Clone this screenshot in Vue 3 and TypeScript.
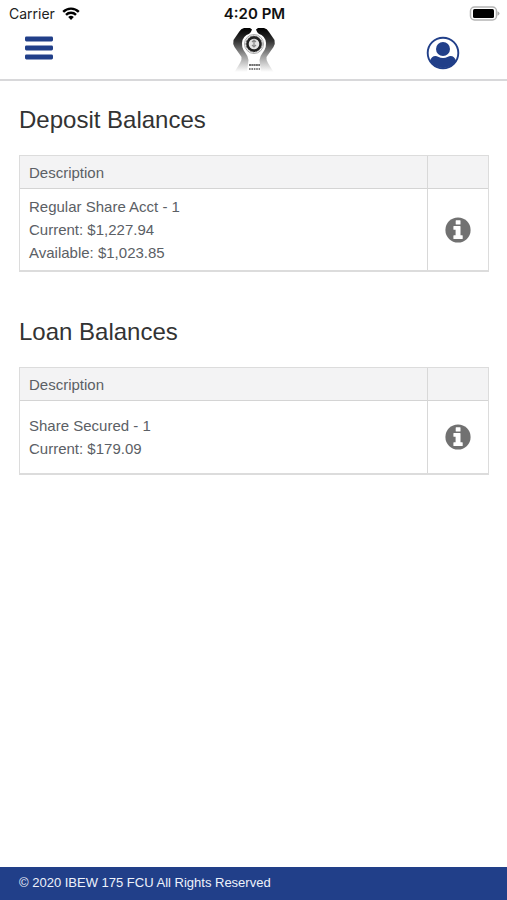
<script setup lang="ts">
interface Account {
  name: string
  lines: string[]
}

interface Section {
  id: string
  title: string
  accounts: Account[]
}

const sections: Section[] = [
  {
    id: 'deposits',
    title: 'Deposit Balances',
    accounts: [
      { name: 'Regular Share Acct - 1', lines: ['Current: $1,227.94', 'Available: $1,023.85'] },
    ],
  },
  {
    id: 'loans',
    title: 'Loan Balances',
    accounts: [{ name: 'Share Secured - 1', lines: ['Current: $179.09'] }],
  },
]
</script>

<template>
  <div class="page">
    <header class="top">
      <div class="status">
        <span class="carrier">
          Carrier
          <svg class="wifi" viewBox="0 0 18 13" aria-hidden="true">
            <path d="M1.2 4.9a11 11 0 0 1 15.6 0" />
            <path d="M4 7.8a7.1 7.1 0 0 1 10 0" />
            <path class="dot" d="M9 13 6.2 10.1a4 4 0 0 1 5.6 0z" />
          </svg>
        </span>
        <span class="time">4:20 PM</span>
        <svg class="battery" viewBox="0 0 31 15" aria-hidden="true">
          <rect x="1.500" y="1" width="26" height="13" rx="4" fill="#fff" stroke="#b4b4b4" stroke-width="1.500" />
          <rect x="4" y="3" width="21" height="9" rx="1.500" fill="#000" />
          <path d="M28.500 5.200q2 .8 2 2.300t-2 2.300z" fill="#aaa" />
        </svg>
      </div>
      <nav class="bar">
        <button class="icon-button menu-button" type="button" aria-label="Menu">
          <svg class="menu" viewBox="0 0 28 24" aria-hidden="true">
            <rect y="0.500" width="28" height="5" rx="1.400" />
            <rect y="9.500" width="28" height="5" rx="1.400" />
            <rect y="18.500" width="28" height="5" rx="1.400" />
          </svg>
        </button>
        <svg class="logo" viewBox="0 0 44 46" aria-hidden="true">
          <defs>
            <linearGradient id="hands" x1="0" y1="0" x2="0" y2="1">
              <stop offset="0" stop-color="#000" />
              <stop offset="0.300" stop-color="#333" />
              <stop offset="0.620" stop-color="#999" />
              <stop offset="1" stop-color="#fff" />
            </linearGradient>
          </defs>
          <path
            fill="url(#hands)"
            d="M20 2.500 18 1h-6Q9 1.600 7 5L1.500 13Q.500 17 2.500 20l7 10q.500 3-1.500 6L2.500 45H15l1.500-12q-.500-4-3-7-5-6-3-13 1-3 4-5 4-1 5.500-5.500z"
          />
          <path
            fill="url(#hands)"
            d="M24 2.500 26 1h6q3 .600 5 4l5.500 8q1 4-1 7l-7 10q-.500 3 1.500 6l5.500 9H29l-1.500-12q.500-4 3-7 5-6 3-13-1-3-4-5-4-1-5.500-5.500z"
          />
          <circle cx="22" cy="17" r="9.500" fill="#fff" stroke="#aaa" stroke-width="1" />
          <circle cx="22" cy="17" r="6.600" fill="#e4e4e4" stroke="#222" stroke-width="2.600" />
          <circle cx="22" cy="17" r="8" fill="none" stroke="#555" stroke-width="0.800" stroke-dasharray="2 1" />
          <path d="M22 13v7m-2-5 2-2 2 2m-4 3 2 2 2-2" fill="none" stroke="#888" stroke-width="1.200" />
          <path d="M17 38h11" stroke="#444" stroke-width="1.500" stroke-dasharray="2 .3" />
          <path d="M17 42h11" stroke="#555" stroke-width="1.300" stroke-dasharray="1.600 .8" />
        </svg>
        <button class="icon-button profile-button" type="button" aria-label="Profile">
          <svg class="profile" viewBox="0 0 34 34" aria-hidden="true">
            <circle cx="17" cy="17" r="15.300" fill="#fff" stroke="#213f89" stroke-width="1.900" />
            <circle cx="17" cy="13" r="7" fill="#213f89" />
            <path
              fill="#213f89"
              d="M4 24.500q1.500-4.500 5.500-4.600 1.500 0 2.500.8 5 2.400 10 0 1-.8 2.500-.8 4 .1 5.500 4.600A15 15 0 0 1 17 32 15 15 0 0 1 4 24.500z"
            />
          </svg>
        </button>
      </nav>
    </header>

    <main class="content">
      <section v-for="section in sections" :key="section.id" class="section">
        <h2 :id="section.id" class="title">{{ section.title }}</h2>
        <table class="balances" :aria-labelledby="section.id">
          <thead>
            <tr>
              <th scope="col">Description</th>
              <td class="action"></td>
            </tr>
          </thead>
          <tbody>
            <tr v-for="account in section.accounts" :key="account.name">
              <td>
                <div>{{ account.name }}</div>
                <div v-for="line in account.lines" :key="line">{{ line }}</div>
              </td>
              <td class="action">
                <button class="icon-button" type="button" :aria-label="`Details for ${account.name}`">
                  <svg class="info" viewBox="0 0 26 26" aria-hidden="true">
                    <circle cx="13" cy="13" r="12.600" fill="#717171" />
                    <path
                      fill="#fff"
                      d="M11.200 3.200h3.800q.5 0 .5.500v3.200q0 .5-.5.500h-3.800q-.5 0-.5-.5V3.700q0-.5.500-.5zM8.900 9h6.100q.5 0 .5.500v8.700h1.700q.5 0 .5.500v2.700q0 .5-.5.500H8.900q-.5 0-.5-.5v-2.700q0-.5.500-.5h1.700v-5.500H8.900q-.5 0-.5-.5V9.500q0-.5.500-.5z"
                    />
                  </svg>
                </button>
              </td>
            </tr>
          </tbody>
        </table>
      </section>
    </main>

    <footer class="footer">© 2020 IBEW 175 FCU All Rights Reserved</footer>
  </div>
</template>

<style>
body {
  margin: 0;
  background: #fff;
}
</style>

<style scoped>
.page {
  display: flex;
  flex-direction: column;
  min-height: 100vh;
  font-family: "Liberation Sans", Arial, sans-serif;
  color: #5b6065;
}

.top {
  border-bottom: 2px solid #d8d8da;
}

.status {
  display: grid;
  grid-template-columns: 1fr auto 1fr;
  align-items: center;
  height: 27px;
  padding: 0 7px 0 9px;
  font: 14px/27px Inter, sans-serif;
  color: #222;
}

.carrier {
  display: flex;
  align-items: center;
  gap: 7px;
}

.wifi {
  width: 18px;
  height: 13px;
  fill: none;
  stroke: #000;
  stroke-width: 2.4;
}

.wifi .dot {
  fill: #000;
  stroke: none;
}

.time {
  font-weight: 600;
  font-size: 15px;
  color: #111;
}

.battery {
  justify-self: end;
  width: 31px;
  height: 15px;
}

.bar {
  display: grid;
  grid-template-columns: 1fr auto 1fr;
  align-items: center;
  height: 52px;
  padding: 0 25px;
}

.icon-button {
  display: inline-flex;
  padding: 0;
  border: 0;
  background: none;
  vertical-align: middle;
  cursor: pointer;
}

.menu-button {
  justify-self: start;
  padding-bottom: 10px;
}

.profile-button {
  justify-self: end;
  margin-right: 22px;
}

.menu {
  width: 28px;
  height: 24px;
  fill: #213f89;
}

.logo {
  width: 44px;
  height: 46px;
  padding-bottom: 6px;
}

.profile {
  width: 34px;
  height: 34px;
}

.content {
  flex: 1;
  padding: 24px 18px 24px 19px;
}

.section + .section {
  margin-top: 45px;
}

.title {
  margin: 0 0 20px;
  font-size: 24px;
  font-weight: 400;
  line-height: 30px;
  color: #333;
}

.balances {
  width: 100%;
  border-collapse: separate;
  border-spacing: 0;
  border: 1px solid #dcdcdc;
  border-bottom: 2px solid #dcdcdc;
  font-size: 15px;
  line-height: 23px;
}

.balances th {
  font-weight: 400;
  text-align: left;
}

.balances td {
  padding: 6px 9px;
}

.balances thead th,
.balances thead td {
  padding: 5px 9px 4px;
  background: #f3f3f4;
  border-bottom: 1px solid #d4d4d4;
}

.balances tbody td {
  height: 72px;
  box-sizing: border-box;
}

.balances .action {
  width: 42px;
  border-left: 1px solid #d8d8d8;
  text-align: center;
}

.info {
  width: 26px;
  height: 26px;
}

.footer {
  padding: 0 19px 2px;
  font-size: 13px;
  line-height: 31px;
  background: #213f89;
  color: #eef2fb;
}
</style>
